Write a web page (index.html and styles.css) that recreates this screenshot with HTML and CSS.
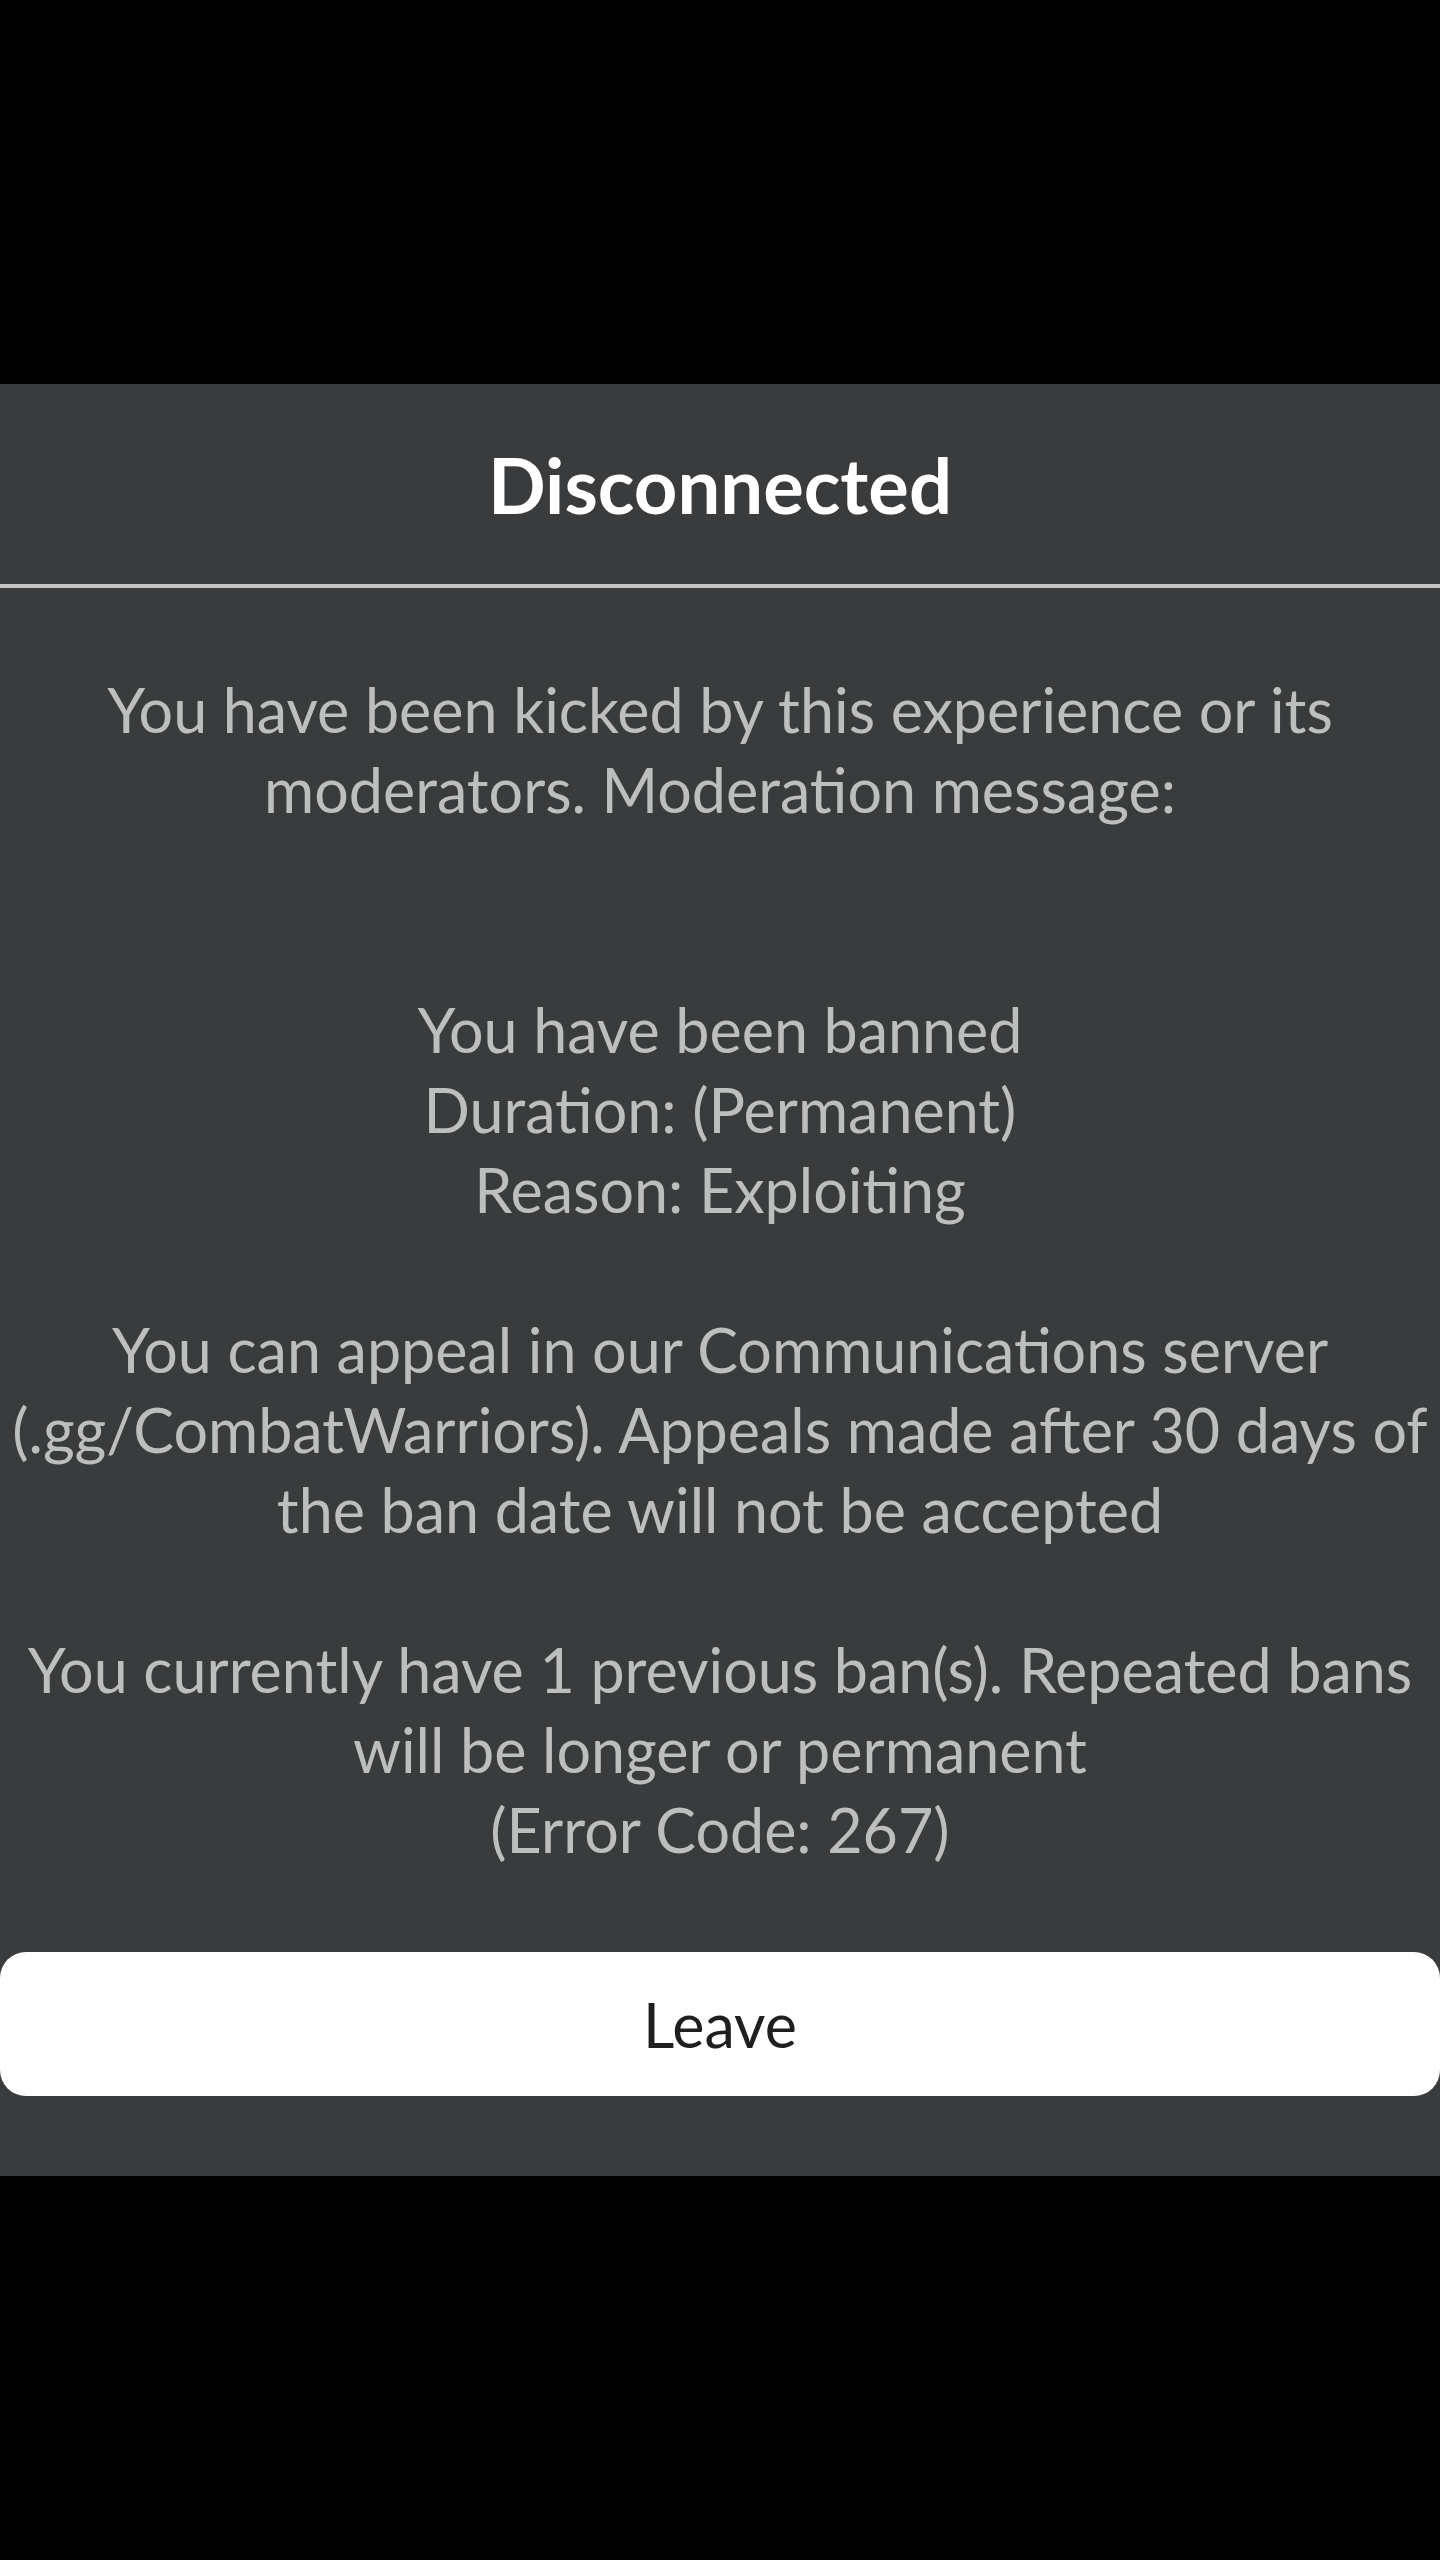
FILE: index.html
```html
<!DOCTYPE html>
<html lang="en">
<head>
    <meta charset="UTF-8">
    <meta name="viewport" content="width=device-width, initial-scale=1.0">
    <title>Disconnected</title>
    <link rel="stylesheet" href="styles.css">
</head>
<body>

<!-- Kick dialog -->
<div class="dialog">
    <div class="dialog-header">
        <h1>Disconnected</h1>
    </div>
    <p class="message">You have been kicked by this experience or its<br>moderators. Moderation message:<br><br><br>You have been banned<br>Duration: (Permanent)<br>Reason: Exploiting<br><br>You can appeal in our Communications server<br>(.gg/CombatWarriors). Appeals made after 30 days of<br>the ban date will not be accepted<br><br>You currently have 1 previous ban(s). Repeated bans<br>will be longer or permanent<br>(Error Code: 267)</p>
    <button class="leave-button">Leave</button>
</div>

</body>
</html>
```

FILE: styles.css
```css
html, body {
    margin: 0;
    background-color: #000;
}

body {
    font-family: Lato, "Open Sans", sans-serif;
    padding-top: 384px;
    height: 2560px;
    box-sizing: border-box;
}

.dialog {
    background-color: #393b3d;
    height: 1792px;
    display: flex;
    flex-direction: column;
}

.dialog-header {
    height: 200px;
    border-bottom: 4px solid #c4c4c4;
    display: flex;
    align-items: center;
    justify-content: center;
}

.dialog-header h1 {
    margin: 0;
    color: #fff;
    font-size: 76px;
    font-weight: bold;
}

.message {
    margin: 82px 0;
    color: #bdbebe;
    font-size: 61px;
    line-height: 80px;
    text-align: center;
    white-space: nowrap;
}

.leave-button {
    display: block;
    width: 100%;
    height: 144px;
    border: none;
    border-radius: 26px;
    background-color: #fff;
    color: #1f1f1f;
    font-family: inherit;
    font-size: 61px;
    cursor: pointer;
}
```
